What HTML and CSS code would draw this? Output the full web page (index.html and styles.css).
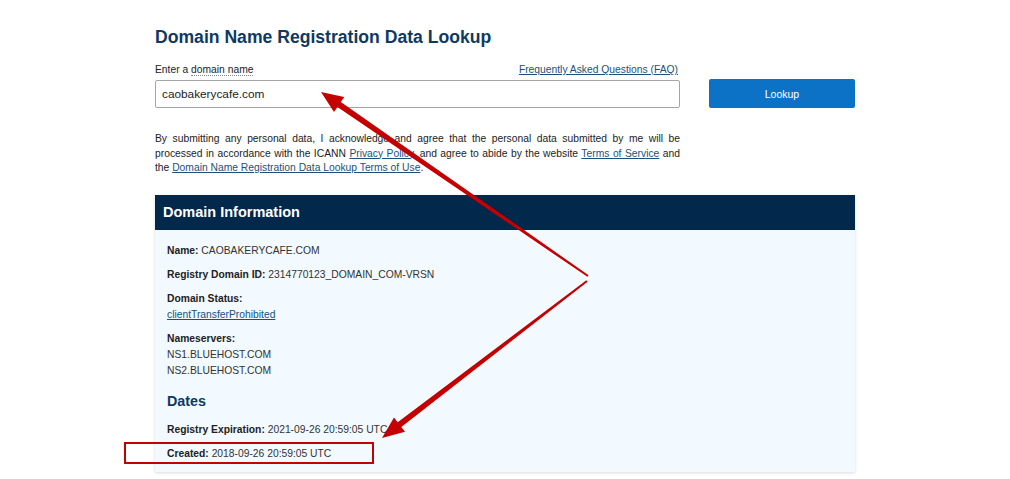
FILE: index.html
```html
<!DOCTYPE html>
<html lang="en">
<head>
    <meta charset="UTF-8">
    <title>Domain Name Registration Data Lookup</title>
    <link rel="stylesheet" href="styles.css">
</head>
<body>
    <div class="page">
        <h1>Domain Name Registration Data Lookup</h1>

        <div class="search-row">
            <div class="search-main">
                <div class="label-row">
                    <label for="domain">Enter a <abbr>domain name</abbr></label>
                    <a href="#" class="faq-link">Frequently Asked Questions (FAQ)</a>
                </div>
                <input type="text" id="domain" value="caobakerycafe.com">
            </div>
            <button class="lookup-button">Lookup</button>
        </div>

        <p class="disclaimer">By submitting any personal data, I acknowledge and agree that the personal data submitted by me will be processed in accordance with the ICANN <a href="#">Privacy Policy</a>, and agree to abide by the website <a href="#">Terms of Service</a> and the <a href="#">Domain Name Registration Data Lookup Terms of Use</a>.</p>

        <div class="panel">
            <div class="panel-header">Domain Information</div>
            <div class="panel-body">
                <div class="field"><b>Name:</b> CAOBAKERYCAFE.COM</div>
                <div class="field"><b>Registry Domain ID:</b> 2314770123_DOMAIN_COM-VRSN</div>
                <div class="field"><b>Domain Status:</b><br><a href="#">clientTransferProhibited</a></div>
                <div class="field"><b>Nameservers:</b><br>NS1.BLUEHOST.COM<br>NS2.BLUEHOST.COM</div>
                <h2>Dates</h2>
                <div class="field"><b>Registry Expiration:</b> 2021-09-26 20:59:05 UTC</div>
                <div class="field"><b>Created:</b> 2018-09-26 20:59:05 UTC</div>
            </div>
        </div>
    </div>

    <!-- annotation layer drawn over the screenshot -->
    <svg class="annotations" width="1010" height="479" viewBox="0 0 1010 479">
        <polygon fill="#c40000" points="588.6,275.2 340.8,102 344.2,97.1 321,92 334,111.9 337.4,107 587.4,276.8"/>
        <polygon fill="#c40000" points="587.6,281.8 401.3,427 405,431.7 382,438 394,417.5 397.7,422.2 586.4,280.2"/>
        <rect x="125" y="443" width="248" height="20" fill="none" stroke="#c40000" stroke-width="2"/>
    </svg>
</body>
</html>
```

FILE: styles.css
```css
/* Page base */
body {
    margin: 0;
    font-family: "Liberation Sans", Arial, sans-serif;
    background-color: #fff;
    color: #333;
    position: relative;
    min-height: 479px;
}

.page {
    width: 700px;
    margin: 0 auto;
    padding-top: 26px;
}

h1 {
    margin: 0 0 15px;
    font-size: 17.6px;
    line-height: 22px;
    color: #0e3a62;
}

/* Search form */
.search-row {
    display: flex;
    align-items: flex-end;
    gap: 29px;
}

.search-main {
    width: 525px;
}

.label-row {
    display: flex;
    justify-content: space-between;
    font-size: 10.3px;
    line-height: 14px;
    margin-bottom: 3px;
    color: #222;
}

abbr {
    text-decoration: none;
    border-bottom: 1px dotted #888;
}

.faq-link {
    color: #1c4f7c;
    margin-right: 2px;
}

input {
    box-sizing: border-box;
    width: 100%;
    height: 28px;
    border: 1px solid #a5a5a5;
    border-radius: 2px;
    padding: 0 6px;
    font-family: inherit;
    font-size: 11.8px;
    color: #222;
}

.lookup-button {
    width: 146px;
    height: 29px;
    background-color: #0b72c5;
    color: #fff;
    border: none;
    border-radius: 2px;
    font-family: inherit;
    font-size: 10.5px;
}

.disclaimer {
    width: 525px;
    margin: 24px 0 19px;
    font-size: 10.3px;
    line-height: 14.5px;
    text-align: justify;
    color: #222;
}

.disclaimer a,
.panel-body a {
    color: #1c4f7c;
}

/* Domain information panel */
.panel {
    box-shadow: 0 1px 3px rgba(0,0,0,0.15);
}

.panel-header {
    background-color: #02284b;
    color: #fff;
    font-size: 14.5px;
    font-weight: bold;
    height: 35px;
    line-height: 35px;
    padding-left: 8px;
}

.panel-body {
    background-color: #f2f9ff;
    padding: 13px 12px 10px;
    font-size: 10.3px;
    line-height: 16px;
    color: #333;
}

.field {
    margin-bottom: 8px;
}

.field:last-child {
    margin-bottom: 0;
}

.field b {
    color: #222;
}

h2 {
    margin: 12px 0 11px;
    font-size: 14.3px;
    line-height: 20px;
    color: #0e3a62;
}

/* Red markup over the page */
.annotations {
    position: absolute;
    top: 0;
    left: 0;
    pointer-events: none;
}
```
